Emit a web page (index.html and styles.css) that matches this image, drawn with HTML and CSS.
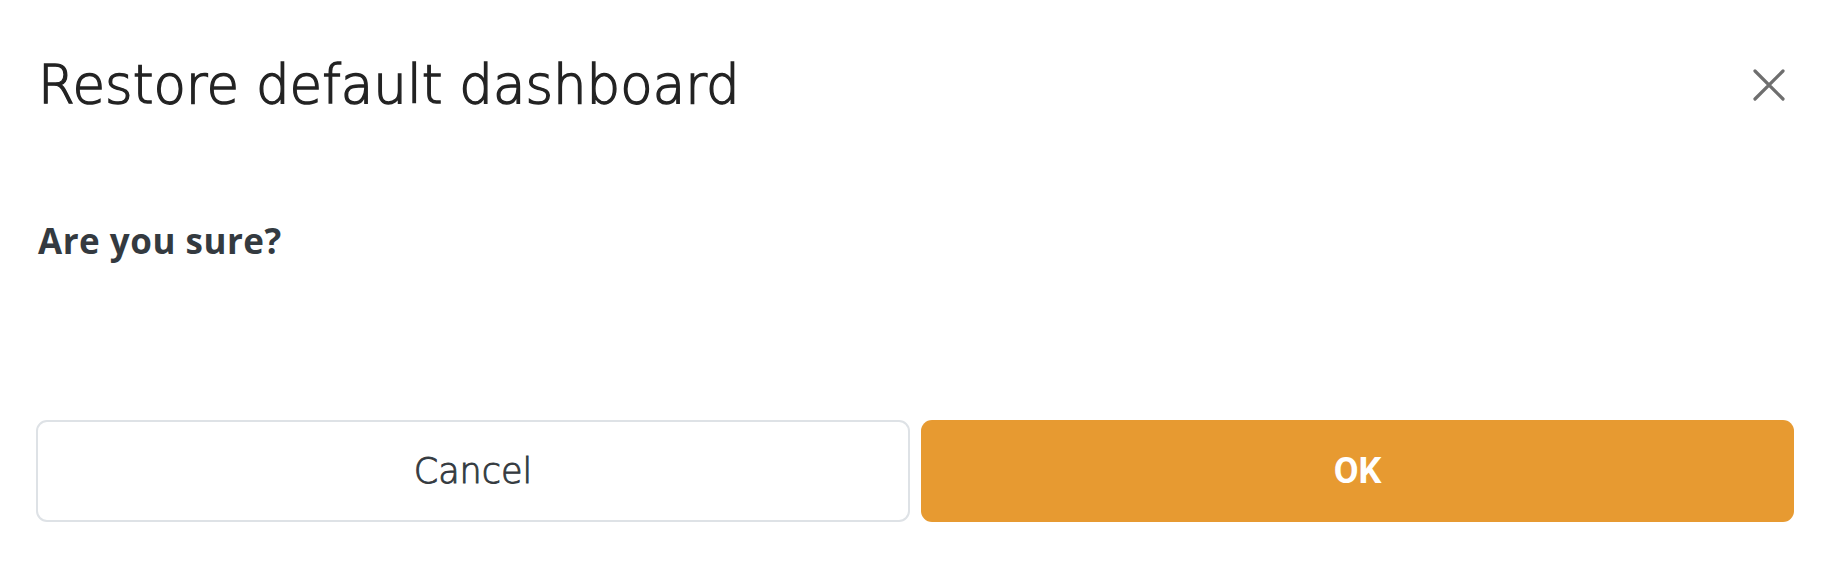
FILE: index.html
```html
<!DOCTYPE html>
<html lang="en">
<head>
<meta charset="utf-8">
<title>Restore default dashboard</title>
<link rel="stylesheet" href="styles.css">
</head>
<body>
<div class="modal">
  <header class="modal-header">
    <h1 class="modal-title">Restore default dashboard</h1>
    <button class="close-btn" aria-label="Close">
      <svg viewBox="0 0 32 32" width="32" height="32" aria-hidden="true">
        <path d="M2 2 L30 30 M30 2 L2 30" stroke="#6e6e6e" stroke-width="3.2" stroke-linecap="round" fill="none"/>
      </svg>
    </button>
  </header>
  <div class="modal-body">
    <p class="question">Are you sure?</p>
  </div>
  <footer class="modal-footer">
    <button class="btn btn-cancel">Cancel</button>
    <button class="btn btn-ok">OK</button>
  </footer>
</div>
</body>
</html>
```

FILE: styles.css
```css
html, body {
  margin: 0;
  padding: 0;
  background: #ffffff;
}

.modal {
  width: 1841px;
  height: 575px;
  box-sizing: border-box;
  padding: 0 47px 0 36px;
  display: flex;
  flex-direction: column;
  font-family: "DejaVu Sans", "Open Sans", sans-serif;
}

.modal-header {
  display: flex;
  justify-content: space-between;
  align-items: center;
  padding-top: 52px;
  height: 66px;
}

.modal-title {
  margin: 0;
  padding-left: 2px;
  font-size: 53px;
  font-weight: 200;
  line-height: 62px;
  color: #232323;
  -webkit-text-stroke: 1.4px #232323;
}

.close-btn {
  border: 0;
  background: none;
  padding: 0;
  margin-right: 9px;
  width: 32px;
  height: 32px;
  display: flex;
}

.modal-body {
  padding-top: 103px;
  height: 60px;
}

.question {
  margin: 0;
  padding-left: 2px;
  font-family: "Open Sans", sans-serif;
  font-size: 35px;
  line-height: 40px;
  font-weight: 700;
  letter-spacing: 0.5px;
  color: #343a40;
}

.modal-footer {
  margin-top: 139px;
  display: flex;
  gap: 11px;
}

.btn {
  height: 102px;
  border-radius: 11px;
  box-sizing: border-box;
  cursor: pointer;
}

.btn-cancel {
  flex: 872 1 0;
  background: #ffffff;
  border: 2px solid #dee2e6;
  color: #343a40;
  font-family: "DejaVu Sans", "Open Sans", sans-serif;
  font-weight: 200;
  font-size: 35px;
  -webkit-text-stroke: 0.9px #343a40;
}

.btn-ok {
  flex: 875 1 0;
  background: #e79a31;
  border: 0;
  color: #ffffff;
  font-family: "Roboto", sans-serif;
  font-weight: 700;
  font-size: 36px;
}
```
